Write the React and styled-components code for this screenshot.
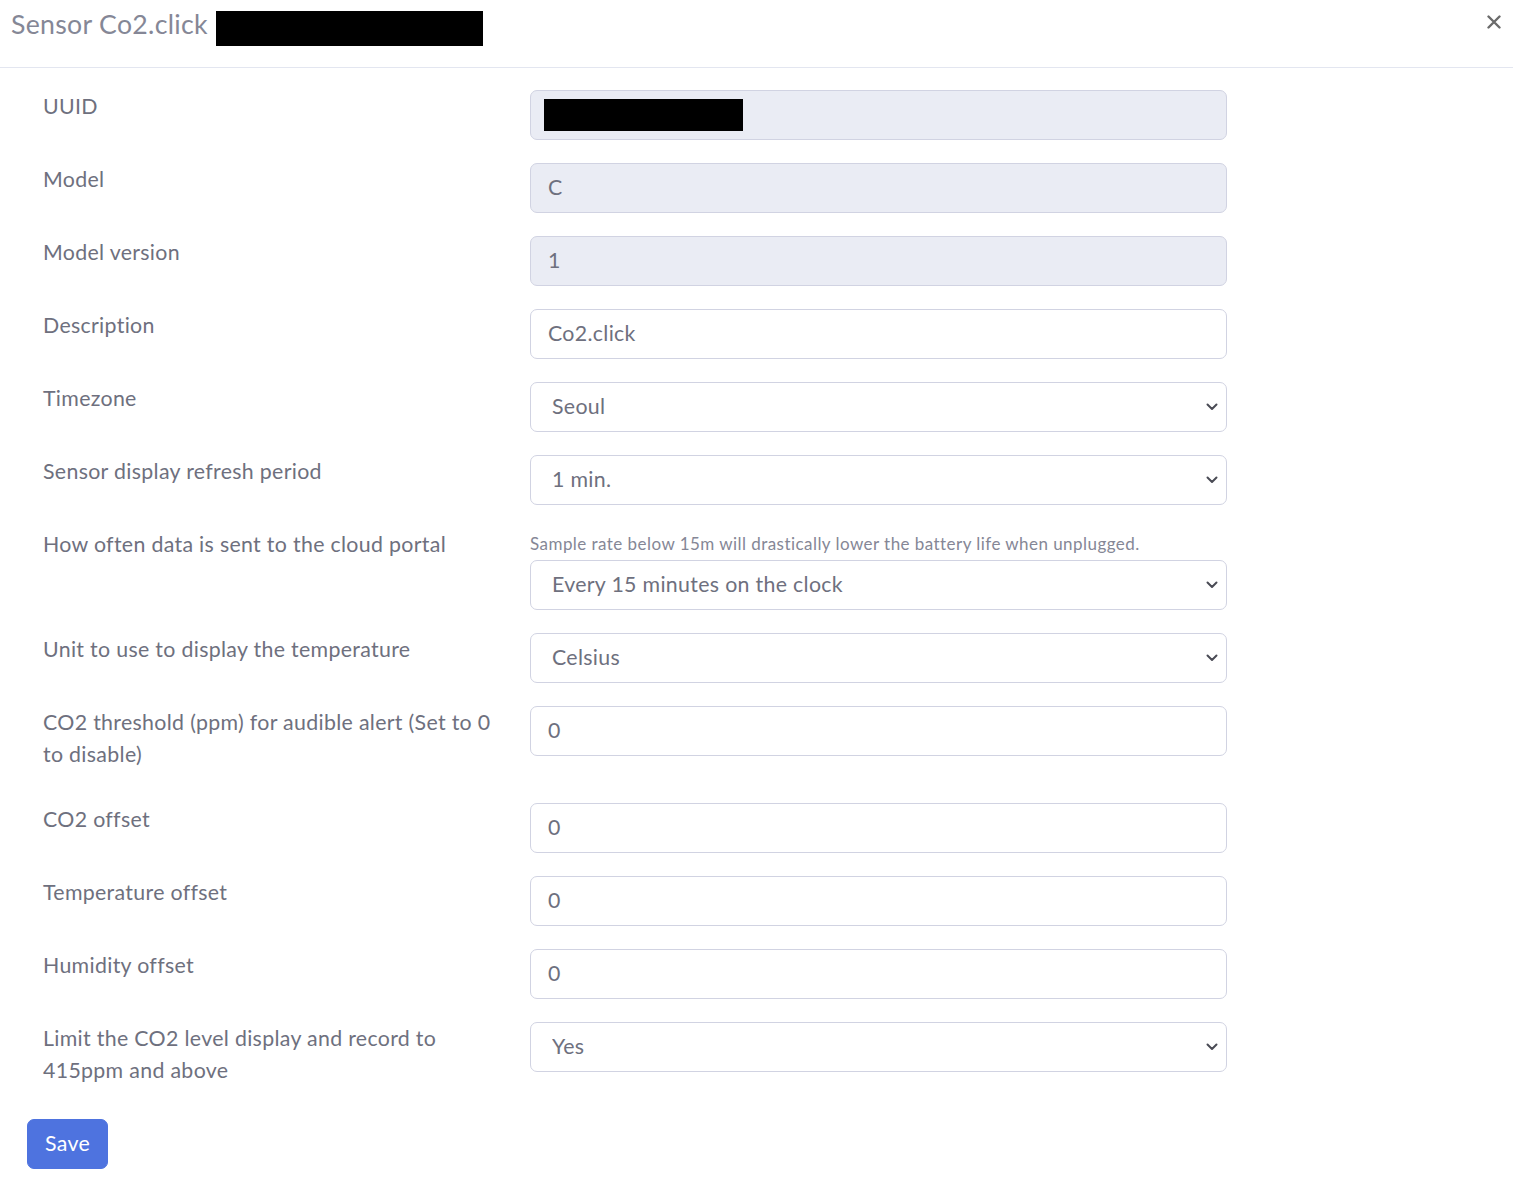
import React from 'react';
import styled, { createGlobalStyle } from 'styled-components';

const GlobalStyle = createGlobalStyle`
  html, body {
    margin: 0;
    padding: 0;
    background: #fff;
  }
  body {
    font-family: Lato, 'Noto Sans', sans-serif;
    font-size: 21.33px;
    line-height: 1.5;
    letter-spacing: 0.32px;
    color: #6e707e;
  }
  * { box-sizing: border-box; }
`;

const chevron = encodeURIComponent(
  `<svg xmlns="http://www.w3.org/2000/svg" width="12" height="8" viewBox="0 0 12 8"><path d="M1.5 1.5 6 6l4.5-4.5" fill="none" stroke="#4a4b55" stroke-width="2" stroke-linecap="round" stroke-linejoin="round"/></svg>`
);

const Header = styled.div`
  display: flex;
  align-items: flex-start;
  justify-content: space-between;
  height: 68px;
  padding: 4px 7px 0 11px;
  border-bottom: 1px solid #e3e6f0;
`;
const Title = styled.h5`
  margin: 0;
  display: flex;
  align-items: flex-start;
  font-size: 26.67px;
  font-weight: 400;
  line-height: 40px;
  letter-spacing: 0.3px;
  color: #858796;
`;
const Redacted = styled.span`
  display: inline-block;
  background: #000;
  width: ${(p) => p.$w}px;
  height: ${(p) => p.$h}px;
  margin-top: ${(p) => p.$top || 0}px;
  margin-left: ${(p) => p.$left || 0}px;
`;
const Close = styled.button`
  border: 0;
  background: none;
  padding: 0;
  margin-top: 0;
  width: 24px;
  height: 36px;
  display: flex;
  align-items: center;
  justify-content: center;
  cursor: pointer;
`;
const Body = styled.div`
  padding: 22px 0 8px 43px;
`;
const FormRow = styled.div`
  display: grid;
  grid-template-columns: 467px 697px;
  column-gap: 20px;
  align-items: start;
  margin-bottom: 23px;
`;
const Label = styled.label`
  display: block;
  line-height: 32px;
  margin-bottom: 10px;
  color: #6e707e;
`;
const Field = styled.div`
  display: flex;
  flex-direction: column;
`;
const Help = styled.small`
  display: block;
  font-size: 17px;
  line-height: 26px;
  padding-top: 3px;
  margin-bottom: 3px;
  letter-spacing: 0.45px;
  color: #858796;
`;
const Input = styled.div`
  height: 50px;
  display: flex;
  align-items: center;
  padding: 0 17px;
  border: 1px solid #d1d3e2;
  border-radius: 7px;
  background: ${(p) => (p.$disabled ? '#eaecf4' : '#fff')};
  color: #6e707e;
`;
const Select = styled.select`
  height: 50px;
  width: 100%;
  padding: 0 40px 0 21px;
  border: 1px solid #d1d3e2;
  border-radius: 7px;
  font: inherit;
  letter-spacing: inherit;
  color: #6e707e;
  appearance: none;
  background: #fff url("data:image/svg+xml,${chevron}") no-repeat right 8px center / 12px 8px;
`;
const SaveButton = styled.button`
  margin-left: -16px;
  height: 50px;
  width: 81px;
  border: 1px solid #4e73df;
  border-radius: 7px;
  background: #4e73df;
  color: #fff;
  font: inherit;
  letter-spacing: inherit;
  cursor: pointer;
`;

const TextRow = ({ label, value, disabled, children }) => (
  <FormRow>
    <Label>{label}</Label>
    <Input $disabled={disabled}>{children || value}</Input>
  </FormRow>
);

const SelectRow = ({ label, value, help }) => (
  <FormRow>
    <Label>{label}</Label>
    <Field>
      {help && <Help>{help}</Help>}
      <Select defaultValue={value}>
        <option>{value}</option>
      </Select>
    </Field>
  </FormRow>
);

const App = () => {
  return (
    <>
      <GlobalStyle />
      <Header>
        <Title>
          Sensor Co2.click
          <Redacted $w={267} $h={35} $top={7} $left={8} />
        </Title>
        <Close aria-label="Close">
          <svg width="14" height="14" viewBox="0 0 14 14">
            <path d="M1.5 1.5l11 11M12.5 1.5l-11 11" stroke="#6b6b6b" strokeWidth="2.4" strokeLinecap="round" />
          </svg>
        </Close>
      </Header>
      <Body>
        <TextRow label="UUID" disabled>
          <Redacted $w={199} $h={32} $left={-4} />
        </TextRow>
        <TextRow label="Model" value="C" disabled />
        <TextRow label="Model version" value="1" disabled />
        <TextRow label="Description" value="Co2.click" />
        <SelectRow label="Timezone" value="Seoul" />
        <SelectRow label="Sensor display refresh period" value="1 min." />
        <SelectRow
          label="How often data is sent to the cloud portal"
          value="Every 15 minutes on the clock"
          help="Sample rate below 15m will drastically lower the battery life when unplugged."
        />
        <SelectRow label="Unit to use to display the temperature" value="Celsius" />
        <TextRow label="CO2 threshold (ppm) for audible alert (Set to 0 to disable)" value="0" />
        <TextRow label="CO2 offset" value="0" />
        <TextRow label="Temperature offset" value="0" />
        <TextRow label="Humidity offset" value="0" />
        <SelectRow label="Limit the CO2 level display and record to 415ppm and above" value="Yes" />
        <SaveButton>Save</SaveButton>
      </Body>
    </>
  );
};

export default App;
